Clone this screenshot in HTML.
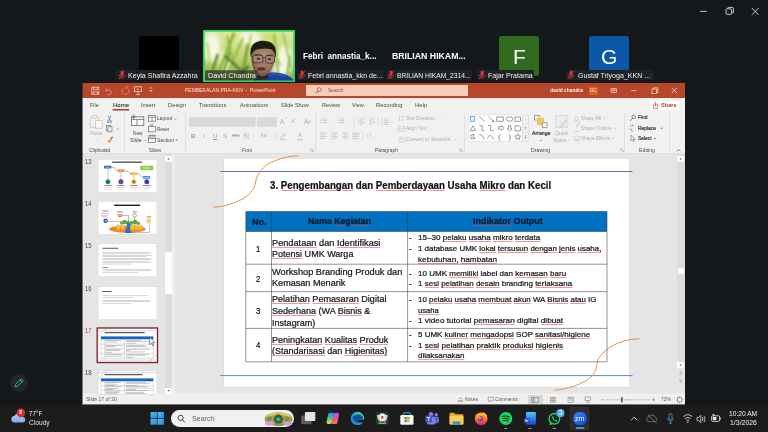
<!DOCTYPE html>
<html lang="id"><head><meta charset="utf-8"><title>PEMBEKALAN PRA-KKN - PowerPoint</title>
<style>
html,body{margin:0;padding:0;}
html{background:#15181b;}
body{width:768px;height:432px;overflow:hidden;position:relative;background:#15181b;font-family:"Liberation Sans", sans-serif;}
div,span.t,svg.a{position:absolute;}
span.t{white-space:pre;line-height:1;display:block;}
u{text-decoration:underline;text-decoration-color:rgba(226,70,60,.55);text-decoration-thickness:0.5px;text-underline-offset:1.1px;}
</style></head><body>
<svg class="a" style="left:0;top:0" width="768" height="432" viewBox="0 0 768 432" fill="none" stroke="#d8dadc" stroke-width="0.9">
<path d="M700 11.4h6.8"/>
<rect x="726" y="8.8" width="5.6" height="5.6" rx="1.2"/><path d="M727.6 8.8v-0.4a1 1 0 0 1 1-1h3.6a1.2 1.2 0 0 1 1.2 1.2v3.6a1 1 0 0 1-1 1h-0.6"/>
<path d="M751.8 8l6.8 6.8M758.6 8l-6.8 6.8"/>
</svg>
<div style="left:139.00px;top:36.00px;width:40.00px;height:40.00px;background:#000;border-radius:3px;"></div>
<div style="left:116.00px;top:70.00px;width:83.50px;height:10.40px;background:#1f2225;border-radius:2px;"></div>
<svg class="a" style="left:117.60px;top:70.20px" width="8" height="10" viewBox="0 0 8 10"><rect x="2.6" y="0.8" width="2.8" height="5" rx="1.4" fill="#e0353c"/><path d="M1.3 4.6a2.7 2.7 0 0 0 5.4 0M4 7.4v1.6" stroke="#e0353c" stroke-width="0.8" fill="none"/><path d="M6.8 0.8L1.2 9" stroke="#e0353c" stroke-width="0.9"/></svg>
<span class="t" style="font-size:7.60px;top:71.73px;color:#f2f2f2;left:127.90px;transform-origin:0 50%;transform:scaleX(0.9332);">Keyla Shafira Azzahra</span>
<svg class="a" style="left:203px;top:30px" width="92" height="52" viewBox="0 0 92 52">
<defs>
<filter id="b1" x="-20%" y="-20%" width="140%" height="140%"><feGaussianBlur stdDeviation="1.1"/></filter>
<filter id="b2" x="-20%" y="-20%" width="140%" height="140%"><feGaussianBlur stdDeviation="0.75"/></filter>
<filter id="b3" x="-20%" y="-20%" width="140%" height="140%"><feGaussianBlur stdDeviation="2.2"/></filter>
<linearGradient id="gr" x1="0" y1="0" x2="0" y2="1"><stop offset="0" stop-color="#dfe6a0"/><stop offset="0.5" stop-color="#c3d67c"/><stop offset="1" stop-color="#86ab44"/></linearGradient>
<radialGradient id="fc" cx="0.52" cy="0.32" r="0.62"><stop offset="0" stop-color="#b99078"/><stop offset="0.55" stop-color="#a57a62"/><stop offset="1" stop-color="#85604c"/></radialGradient>
<clipPath id="cp"><rect x="1.5" y="1.5" width="89" height="49"/></clipPath>
</defs>
<rect width="92" height="52" fill="#22d568"/>
<g clip-path="url(#cp)">
<rect x="1.5" y="1.5" width="89" height="49" fill="url(#gr)"/>
<g filter="url(#b3)">
<ellipse cx="9" cy="18" rx="8" ry="15" fill="#f6f6e6"/>
<ellipse cx="46" cy="8" rx="12" ry="7" fill="#f4f5dc"/>
<ellipse cx="82" cy="30" rx="8" ry="15" fill="#f3f5e4"/>
<ellipse cx="76" cy="40" rx="6" ry="8" fill="#f6f7ea"/>
<ellipse cx="30" cy="8" rx="8" ry="5" fill="#dbe58c"/>
<ellipse cx="68" cy="7" rx="9" ry="5" fill="#d3df74"/>
<ellipse cx="22" cy="32" rx="6" ry="12" fill="#e6ecc0"/>
</g>
<g filter="url(#b1)" fill="none">
<path d="M12 52L31 3" stroke="#7aae2c" stroke-width="2.6"/>
<path d="M17 52L27 22" stroke="#5d9426" stroke-width="2.2"/>
<path d="M21 52L40 8" stroke="#8dbb3c" stroke-width="2"/>
<path d="M33 44L24 6" stroke="#8ab83e" stroke-width="2"/>
<path d="M38 52L45 14" stroke="#6a9c2c" stroke-width="2.4"/>
<path d="M5 52L15 24" stroke="#5a8a28" stroke-width="2.4"/>
<path d="M22 26L42 44" stroke="#3f7020" stroke-width="2.2"/>
<path d="M28 52L46 36" stroke="#47781f" stroke-width="2.6"/>
<path d="M8 40L4 12" stroke="#a9c95a" stroke-width="1.6"/>
<path d="M76 52L71 4" stroke="#8fba3e" stroke-width="2"/>
<path d="M88 38L80 3" stroke="#9cc44a" stroke-width="1.8"/>
<path d="M83 52L87 26" stroke="#86b43c" stroke-width="2"/>
<path d="M66 14L78 36" stroke="#a4c954" stroke-width="1.6"/>
<path d="M44 30L48 4" stroke="#a4c850" stroke-width="1.6"/>
<path d="M2 52h46" stroke="#4f7d22" stroke-width="5"/>
</g>
<g filter="url(#b2)">
<path d="M50 52C51 47 55 44.500 60 43.500C66 42 74 42 80 43.800C86 45.500 90 48.500 92 52Z" fill="#1d3f9e"/>
<path d="M66 44C72 42.500 79 43 84 45.500L80 47C75 45 70 45 66 46Z" fill="#2c52b8"/>
<path d="M53.500 41L55 50L64.500 49L65.500 40Z" fill="#2e2522"/>
<path d="M48.600 24C47.600 33 50 41 55 44.600Q59 47.200 63 45.200C68.500 42 72.400 34 71.800 24C70 16.500 50.400 16.500 48.600 24Z" fill="url(#fc)"/>
<path d="M48.600 27Q48.200 36 53 43Q50.500 34 50.600 27Z" fill="#6e4c3c" fill-opacity="0.8"/>
<path d="M53 40Q59 46.500 66 40.500Q63.500 46 59 46.600Q55 46 53 40Z" fill="#7a5646" fill-opacity="0.8"/>
<path d="M47.800 27.500C45.600 15 52 10.800 60 10.800C68.400 10.800 74.600 15 72.600 27.500C71.800 22.500 70 19.600 66 19C62 18.400 57 18.600 54 19.400C50.600 20.400 48.800 23 47.800 27.500Z" fill="#1f1e19"/>
<rect x="49.800" y="24.800" width="10" height="8" rx="2.200" fill="#9c877c" fill-opacity="0.75" stroke="#2e2724" stroke-width="0.700"/>
<rect x="62.600" y="25.200" width="8.800" height="8" rx="2.200" fill="#9c877c" fill-opacity="0.75" stroke="#2e2724" stroke-width="0.700"/>
<path d="M59.800 27.600h2.800M49.800 26.600l-1.600-0.600M71.400 27l1-0.400" stroke="#2e2724" stroke-width="0.700"/>
<ellipse cx="55.300" cy="28.700" rx="1.700" ry="0.900" fill="#2e211c"/>
<ellipse cx="66.400" cy="29.200" rx="1.600" ry="0.900" fill="#2e211c"/>
<path d="M52 25.600q3-1.200 6.400-0.200M63.400 25.800q3-1 6 0.200" stroke="#3a2a22" stroke-width="0.800" fill="none"/>
<path d="M60.600 29.500q-0.800 3 -0.400 4.200q1.400 0.800 2.800 0" stroke="#7e5a48" stroke-width="0.800" fill="none"/>
<ellipse cx="58.400" cy="38.800" rx="4.200" ry="1.800" fill="#4e2e2a"/>
<path d="M54.800 38.200q3.600-1.200 7.200 0" stroke="#8a5a4e" stroke-width="0.600" fill="none"/>
</g>
<rect x="2" y="40.200" width="52.500" height="10.200" rx="1.500" fill="#2c3126" fill-opacity="0.74"/>
</g>
</svg>
<span class="t" style="font-size:7.60px;top:71.83px;color:#f4f4f4;left:207.50px;transform-origin:0 50%;transform:scaleX(0.9427);">David Chandra</span>
<span class="t" style="font-size:9.20px;top:51.68px;color:#fff;font-weight:700;left:302.50px;transform-origin:0 50%;transform:scaleX(0.8875);">Febri  annastia_k...</span>
<div style="left:296.50px;top:70.00px;width:87.20px;height:10.40px;background:#1f2225;border-radius:2px;"></div>
<svg class="a" style="left:298.10px;top:70.20px" width="8" height="10" viewBox="0 0 8 10"><rect x="2.6" y="0.8" width="2.8" height="5" rx="1.4" fill="#e0353c"/><path d="M1.3 4.6a2.7 2.7 0 0 0 5.4 0M4 7.4v1.6" stroke="#e0353c" stroke-width="0.8" fill="none"/><path d="M6.8 0.8L1.2 9" stroke="#e0353c" stroke-width="0.9"/></svg>
<span class="t" style="font-size:7.60px;top:71.73px;color:#f2f2f2;left:307.70px;transform-origin:0 50%;transform:scaleX(0.9206);">Febri annastia_kkn de...</span>
<span class="t" style="font-size:9.20px;top:51.68px;color:#fff;font-weight:700;left:392.00px;transform-origin:0 50%;transform:scaleX(0.9503);">BRILIAN HIKAM...</span>
<div style="left:385.80px;top:70.00px;width:86.50px;height:10.40px;background:#1f2225;border-radius:2px;"></div>
<svg class="a" style="left:387.40px;top:70.20px" width="8" height="10" viewBox="0 0 8 10"><rect x="2.6" y="0.8" width="2.8" height="5" rx="1.4" fill="#e0353c"/><path d="M1.3 4.6a2.7 2.7 0 0 0 5.4 0M4 7.4v1.6" stroke="#e0353c" stroke-width="0.8" fill="none"/><path d="M6.8 0.8L1.2 9" stroke="#e0353c" stroke-width="0.9"/></svg>
<span class="t" style="font-size:7.60px;top:71.73px;color:#f2f2f2;left:397.30px;transform-origin:0 50%;transform:scaleX(0.8854);">BRILIAN HIKAM_2314...</span>
<div style="left:498.80px;top:36.00px;width:40.40px;height:40.00px;background:#2f6a1f;border-radius:3px;"></div>
<span class="t" style="font-size:21.00px;top:46.33px;color:#fff;left:512.58px;transform-origin:0 50%;transform:scaleX(1.0010);">F</span>
<div style="left:476.50px;top:70.00px;width:57.50px;height:10.40px;background:#1f2225;border-radius:2px;"></div>
<svg class="a" style="left:478.10px;top:70.20px" width="8" height="10" viewBox="0 0 8 10"><rect x="2.6" y="0.8" width="2.8" height="5" rx="1.4" fill="#e0353c"/><path d="M1.3 4.6a2.7 2.7 0 0 0 5.4 0M4 7.4v1.6" stroke="#e0353c" stroke-width="0.8" fill="none"/><path d="M6.8 0.8L1.2 9" stroke="#e0353c" stroke-width="0.9"/></svg>
<span class="t" style="font-size:7.60px;top:71.73px;color:#f2f2f2;left:487.70px;transform-origin:0 50%;transform:scaleX(0.9300);">Fajar Pratama</span>
<div style="left:589.20px;top:36.00px;width:40.00px;height:40.00px;background:#0c58a6;border-radius:3px;"></div>
<span class="t" style="font-size:21.00px;top:46.33px;color:#fff;left:600.82px;transform-origin:0 50%;transform:scaleX(1.0010);">G</span>
<div style="left:565.80px;top:70.00px;width:87.80px;height:10.40px;background:#1f2225;border-radius:2px;"></div>
<svg class="a" style="left:567.40px;top:70.20px" width="8" height="10" viewBox="0 0 8 10"><rect x="2.6" y="0.8" width="2.8" height="5" rx="1.4" fill="#e0353c"/><path d="M1.3 4.6a2.7 2.7 0 0 0 5.4 0M4 7.4v1.6" stroke="#e0353c" stroke-width="0.8" fill="none"/><path d="M6.8 0.8L1.2 9" stroke="#e0353c" stroke-width="0.9"/></svg>
<span class="t" style="font-size:7.60px;top:71.73px;color:#f2f2f2;left:577.50px;transform-origin:0 50%;transform:scaleX(0.9286);">Gustaf Triyoga_KKN ...</span>
<svg class="a" style="left:9px;top:373px" width="20" height="20" viewBox="0 0 20 20"><circle cx="10" cy="10" r="9" fill="#23272b"/><path d="M6.200 13.800l0.600-2.600 5.400-5.400 2 2-5.400 5.400zM11 7l2 2" fill="none" stroke="#1fc466" stroke-width="1" stroke-linejoin="round"/></svg>
<div style="left:82.00px;top:83.00px;width:603.00px;height:321.00px;background:#f3f1f0;"></div>
<div style="left:82.00px;top:83.00px;width:603.00px;height:15.00px;background:#b7472a;"></div>
<div style="left:82.00px;top:154.00px;width:603.00px;height:240.00px;background:#e5e5e5;"></div>
<div style="left:82.00px;top:153.00px;width:603.00px;height:1.00px;background:#e2e0de;"></div>
<div style="left:82.00px;top:394.00px;width:603.00px;height:10.00px;background:#f2f0ef;"></div>
<div style="left:82.00px;top:393.00px;width:603.00px;height:1.00px;background:#ecebea;"></div>
<span class="t" style="font-size:5.60px;top:87.77px;color:#f7e3dc;left:185.20px;transform-origin:0 50%;transform:scaleX(0.8977);">PEMBEKALAN PRA-KKN  -  PowerPoint</span>
<div style="left:306.10px;top:85.20px;width:162.00px;height:10.70px;background:#fbcdb9;"></div>
<span class="t" style="font-size:5.60px;top:87.97px;color:#8a4a36;left:328.20px;transform-origin:0 50%;transform:scaleX(0.8619);">Search</span>
<span class="t" style="font-size:5.60px;top:88.37px;color:#fdf1ec;font-weight:700;left:550.00px;transform-origin:0 50%;transform:scaleX(0.8690);">david chandra</span>
<div style="left:588.50px;top:86.90px;width:9.20px;height:7.70px;background:#d8651f;"></div>
<span class="t" style="font-size:4.60px;top:88.64px;color:#fbe0cc;left:589.78px;transform-origin:0 50%;transform:scaleX(1.0010);">DC</span>
<span class="t" style="font-size:6.00px;top:102.28px;color:#4a4846;left:89.80px;transform-origin:0 50%;transform:scaleX(0.8986);">File</span>
<span class="t" style="font-size:6.00px;top:102.28px;color:#2f2e2d;left:113.00px;transform-origin:0 50%;transform:scaleX(0.9980);-webkit-text-stroke:0.12px;">Home</span>
<span class="t" style="font-size:6.00px;top:102.28px;color:#4a4846;left:141.00px;transform-origin:0 50%;transform:scaleX(0.9514);">Insert</span>
<span class="t" style="font-size:6.00px;top:102.28px;color:#4a4846;left:168.00px;transform-origin:0 50%;transform:scaleX(0.9622);">Design</span>
<span class="t" style="font-size:6.00px;top:102.28px;color:#4a4846;left:198.75px;transform-origin:0 50%;transform:scaleX(0.9347);">Transitions</span>
<span class="t" style="font-size:6.00px;top:102.28px;color:#4a4846;left:239.50px;transform-origin:0 50%;transform:scaleX(0.9489);">Animations</span>
<span class="t" style="font-size:6.00px;top:102.28px;color:#4a4846;left:281.20px;transform-origin:0 50%;transform:scaleX(0.9248);">Slide Show</span>
<span class="t" style="font-size:6.00px;top:102.28px;color:#4a4846;left:321.80px;transform-origin:0 50%;transform:scaleX(0.9134);">Review</span>
<span class="t" style="font-size:6.00px;top:102.28px;color:#4a4846;left:352.00px;transform-origin:0 50%;transform:scaleX(0.9134);">View</span>
<span class="t" style="font-size:6.00px;top:102.28px;color:#4a4846;left:376.30px;transform-origin:0 50%;transform:scaleX(0.9676);">Recording</span>
<span class="t" style="font-size:6.00px;top:102.28px;color:#4a4846;left:414.60px;transform-origin:0 50%;transform:scaleX(1.0036);">Help</span>
<svg class="a" style="left:0;top:0" width="768" height="432" viewBox="0 0 768 432"><rect x="112.700" y="109" width="16.400" height="1.600" fill="#b7472a"/><rect x="82" y="83" width="0.550" height="321" fill="#15181b"/></svg>
<div style="left:650.40px;top:100.60px;width:28.60px;height:9.20px;background:#fff;border-radius:1px;"></div>
<span class="t" style="font-size:5.60px;top:102.67px;color:#b3402a;font-weight:700;left:660.50px;transform-origin:0 50%;transform:scaleX(1.0088);">Share</span>
<span class="t" style="font-size:5.60px;top:130.67px;color:#b0adab;left:89.95px;transform-origin:0 50%;transform:scaleX(0.8725);">Paste</span>
<span class="t" style="font-size:5.60px;top:148.37px;color:#4a4846;left:89.30px;transform-origin:0 50%;transform:scaleX(0.8883);">Clipboard</span>
<span class="t" style="font-size:5.60px;top:131.17px;color:#4a4846;left:132.80px;transform-origin:0 50%;transform:scaleX(0.8560);">New</span>
<span class="t" style="font-size:5.60px;top:138.07px;color:#4a4846;left:130.20px;transform-origin:0 50%;transform:scaleX(0.9306);">Slide</span>
<span class="t" style="font-size:5.60px;top:116.27px;color:#4a4846;left:157.00px;transform-origin:0 50%;transform:scaleX(0.9100);">Layout</span>
<span class="t" style="font-size:5.60px;top:127.07px;color:#4a4846;left:157.00px;transform-origin:0 50%;transform:scaleX(0.8197);">Reset</span>
<span class="t" style="font-size:5.60px;top:137.77px;color:#4a4846;left:157.00px;transform-origin:0 50%;transform:scaleX(0.9096);">Section</span>
<span class="t" style="font-size:5.60px;top:148.37px;color:#4a4846;left:148.80px;transform-origin:0 50%;transform:scaleX(0.7992);">Slides</span>
<span class="t" style="font-size:5.60px;top:148.37px;color:#4a4846;left:241.60px;transform-origin:0 50%;transform:scaleX(0.8828);">Font</span>
<span class="t" style="font-size:5.60px;top:148.37px;color:#4a4846;left:374.70px;transform-origin:0 50%;transform:scaleX(0.8757);">Paragraph</span>
<span class="t" style="font-size:5.60px;top:115.97px;color:#b0adab;left:406.30px;transform-origin:0 50%;transform:scaleX(0.8460);">Text Direction</span>
<span class="t" style="font-size:5.60px;top:126.37px;color:#b0adab;left:406.30px;transform-origin:0 50%;transform:scaleX(0.8643);">Align Text</span>
<span class="t" style="font-size:5.60px;top:136.77px;color:#b0adab;left:406.30px;transform-origin:0 50%;transform:scaleX(0.9033);">Convert to SmartArt</span>
<span class="t" style="font-size:5.60px;top:130.67px;color:#333;left:531.60px;transform-origin:0 50%;transform:scaleX(0.9234);-webkit-text-stroke:0.2px;">Arrange</span>
<span class="t" style="font-size:5.60px;top:130.67px;color:#b0adab;left:555.10px;transform-origin:0 50%;transform:scaleX(0.9074);">Quick</span>
<span class="t" style="font-size:5.60px;top:138.17px;color:#b0adab;left:552.60px;transform-origin:0 50%;transform:scaleX(0.8787);">Styles</span>
<span class="t" style="font-size:5.60px;top:116.17px;color:#b0adab;left:581.25px;transform-origin:0 50%;transform:scaleX(0.8133);">Shape Fill</span>
<span class="t" style="font-size:5.60px;top:125.57px;color:#b0adab;left:581.25px;transform-origin:0 50%;transform:scaleX(0.8665);">Shape Outline</span>
<span class="t" style="font-size:5.60px;top:135.57px;color:#b0adab;left:581.25px;transform-origin:0 50%;transform:scaleX(0.8413);">Shape Effects</span>
<span class="t" style="font-size:5.60px;top:148.37px;color:#4a4846;left:531.00px;transform-origin:0 50%;transform:scaleX(0.9391);">Drawing</span>
<span class="t" style="font-size:5.60px;top:115.17px;color:#333;left:638.00px;transform-origin:0 50%;transform:scaleX(0.8714);-webkit-text-stroke:0.2px;">Find</span>
<span class="t" style="font-size:5.60px;top:125.57px;color:#333;left:638.00px;transform-origin:0 50%;transform:scaleX(0.8758);-webkit-text-stroke:0.2px;">Replace</span>
<span class="t" style="font-size:5.60px;top:135.57px;color:#333;left:638.00px;transform-origin:0 50%;transform:scaleX(0.8675);-webkit-text-stroke:0.2px;">Select</span>
<span class="t" style="font-size:5.60px;top:148.37px;color:#4a4846;left:638.70px;transform-origin:0 50%;transform:scaleX(0.9342);">Editing</span>
<span class="t" style="font-size:6.00px;top:132.98px;color:#9c9997;font-weight:700;left:191.33px;transform-origin:0 50%;transform:scaleX(1.0010);">B</span>
<span class="t" style="font-size:6.00px;top:132.98px;color:#9c9997;font-style:italic;left:203.46px;transform-origin:0 50%;transform:scaleX(1.0010);">I</span>
<span class="t" style="font-size:6.00px;top:132.98px;color:#9c9997;left:212.53px;transform-origin:0 50%;transform:scaleX(1.0010);text-decoration:underline;">U</span>
<span class="t" style="font-size:6.00px;top:132.98px;color:#9c9997;left:222.99px;transform-origin:0 50%;transform:scaleX(1.0010);">S</span>
<span class="t" style="font-size:4.60px;top:133.84px;color:#b0adab;left:231.79px;transform-origin:0 50%;transform:scaleX(1.0010);text-decoration:line-through;">abc</span>
<span class="t" style="font-size:5.20px;top:132.76px;color:#b0adab;left:243.22px;transform-origin:0 50%;transform:scaleX(1.0010);">AV</span>
<span class="t" style="font-size:5.60px;top:133.17px;color:#b0adab;left:259.87px;transform-origin:0 50%;transform:scaleX(1.0010);">Aa</span>
<span class="t" style="font-size:6.60px;top:118.50px;color:#b0adab;left:280.19px;transform-origin:0 50%;transform:scaleX(1.0010);">A</span>
<span class="t" style="font-size:5.60px;top:119.37px;color:#b0adab;left:290.93px;transform-origin:0 50%;transform:scaleX(1.0010);">A</span>
<span class="t" style="font-size:6.60px;top:118.50px;color:#b0adab;left:304.09px;transform-origin:0 50%;transform:scaleX(1.0010);">A</span>
<span class="t" style="font-size:6.20px;top:132.09px;color:#b0adab;left:297.93px;transform-origin:0 50%;transform:scaleX(1.0010);">A</span>
<svg class="a" style="left:0;top:0" width="768" height="432" viewBox="0 0 768 432" fill="none"><path d="M124.5 113v38.5" stroke="#d9d6d4" stroke-width="0.7"/><path d="M185.6 113v38.5" stroke="#d9d6d4" stroke-width="0.7"/><path d="M315.7 113v38.5" stroke="#d9d6d4" stroke-width="0.7"/><path d="M464.4 113v38.5" stroke="#d9d6d4" stroke-width="0.7"/><path d="M624.6 113v38.5" stroke="#d9d6d4" stroke-width="0.7"/><path d="M669.6 113v38.5" stroke="#d9d6d4" stroke-width="0.7"/><path d="M276.4 131.0V141.0" stroke="#d4d1cf" stroke-width="0.6"/><path d="M354.0 117.0V126.5" stroke="#d4d1cf" stroke-width="0.6"/><path d="M378.5 117.0V126.5" stroke="#d4d1cf" stroke-width="0.6"/><path d="M362.4 131.0V141.0" stroke="#d4d1cf" stroke-width="0.6"/><g stroke="#f2d3c9" stroke-width="0.8" fill="none"><rect x="91.8" y="87.2" width="7" height="7"/><path d="M93.4 87.2v2.4h3.8v-2.4M93.2 94.2v-2.4h4.2v2.4"/><path d="M107.2 88.2l-1.8 1.8 1.8 1.8M105.6 90h3.4a2.4 2.4 0 0 1 0 4.8h-1.6" stroke="#e39c86"/><path d="M126.6 87.6a3.5 3.5 0 1 1-3.2 0.4M126.8 85.8v2.2h-2.2" stroke="#d98a73"/><rect x="134.6" y="86.8" width="6.8" height="4.8"/><path d="M138 91.6v2.4M136 94.6h4"/><path d="M137.2 88.2v2l1.8-1z" fill="#f2d3c9" stroke="none"/><path d="M149.6 88h2.8"/><path d="M149.4 90.2h3.2l-1.6 1.8z" fill="#f2d3c9" stroke="none"/><path d="M114.6 90.6l0.8 0.8 0.8-0.8" stroke="#e39c86" stroke-width="0.5"/><circle cx="319.2" cy="89.6" r="2" stroke="#8a4a36" stroke-width="0.7"/><path d="M317.8 91l-2.2 2.4" stroke="#8a4a36" stroke-width="0.8"/><rect x="611" y="88.600" width="5.400" height="4" rx="0.400"/><path d="M611 90h5.400M613.700 90v2.600"/><path d="M631.2 90.6h5.4"/><rect x="652" y="89" width="4.6" height="4.6"/><path d="M653.4 89v-1.2h4.6v4.6h-1.4"/><path d="M671.8 88l5 5M676.8 88l-5 5" stroke-width="0.9"/></g><path d="M653.4 104.8h4.2v3.6h-4.2zM655.5 106.4v-4M654 103.6l1.5-1.5 1.5 1.5" stroke="#b3402a" stroke-width="0.6" fill="none"/><path d="M676.6 151.4l1.9-1.9 1.9 1.9" stroke="#555" stroke-width="0.7" fill="none"/><path d="M104.6 149h2.4M104.6 149v2.4M105.8 151.6h1.6v-1.6" stroke="#8f8c8a" stroke-width="0.5" fill="none"/><path d="M310.6 149h2.4M310.6 149v2.4M311.8 151.6h1.6v-1.6" stroke="#8f8c8a" stroke-width="0.5" fill="none"/><path d="M459.6 149h2.4M459.6 149v2.4M460.8 151.6h1.6v-1.6" stroke="#8f8c8a" stroke-width="0.5" fill="none"/><path d="M620.8 149h2.4M620.8 149v2.4M622.0 151.6h1.6v-1.6" stroke="#8f8c8a" stroke-width="0.5" fill="none"/><g stroke="#c6c3c1" stroke-width="0.8" fill="#f3f1f0"><rect x="90.2" y="117" width="8.6" height="10.6" rx="0.8"/><rect x="92.6" y="115.4" width="3.8" height="2.8" rx="0.6"/><rect x="95.6" y="120.6" width="6.6" height="7.6" fill="#fafafa"/></g><path d="M95.10 139.70l1.10 1.10l1.10 -1.10" stroke="#c0bdbb" stroke-width="0.6" fill="none"/><path d="M108 115.6l2.6 5M111 115.6l-2.6 5" stroke="#6e6c6a" stroke-width="0.7"/><circle cx="108.2" cy="121.6" r="1" fill="none" stroke="#2a7fd4" stroke-width="0.7"/><circle cx="110.8" cy="121.6" r="1" fill="none" stroke="#2a7fd4" stroke-width="0.7"/><g stroke="#6e6c6a" stroke-width="0.7" fill="#f8f8f8"><rect x="106.4" y="125.4" width="4" height="5"/><rect x="108" y="126.8" width="4" height="5"/></g><path d="M116.50 128.30l1.10 1.10l1.10 -1.10" stroke="#6a6866" stroke-width="0.6" fill="none"/><path d="M107.2 141.6l2.8-2.8 1.8 1.6-2.6 2.6z" fill="#e8a33a"/><path d="M110.2 138.6l2-2.2 1 1-2 2.2z" fill="#6e6c6a"/><g stroke="#6e6c6a" stroke-width="0.8" fill="#fbfbfb"><rect x="131.6" y="116.8" width="12.2" height="8.8"/><path d="M131.6 119.4h12.2M137 119.4v6.2" fill="none"/></g><path d="M133.6 114.4v5M131.1 116.9h5" stroke="#2d9a54" stroke-width="0.9"/><path d="M144.30 139.70l1.10 1.10l1.10 -1.10" stroke="#6a6866" stroke-width="0.6" fill="none"/><g stroke="#6e6c6a" stroke-width="0.7" fill="#fbfbfb"><rect x="148.6" y="115.6" width="7" height="5.6"/><path d="M148.6 117.2h7M152 117.2v4" fill="none"/><rect x="148.6" y="126.4" width="7" height="5.4"/><rect x="148.6" y="137" width="7" height="5.6"/><path d="M148.6 138.6h7" fill="none"/></g><path d="M149.4 126.6a2 2 0 0 1 3-1.6M152.6 123.8v1.6h-1.6" stroke="#2a7fd4" stroke-width="0.6" fill="none"/><path d="M148.6 135.4h7" stroke="#2d9a54" stroke-width="0.9"/><path d="M174.30 118.30l1.10 1.10l1.10 -1.10" stroke="#6a6866" stroke-width="0.6" fill="none"/><path d="M175.80 139.40h2.4l-1.2 1.4z" fill="#6a6866"/><rect x="189" y="117.2" width="66.5" height="9.6" fill="#dbd9d8"/><rect x="257" y="117.2" width="20" height="9.6" fill="#dbd9d8"/><path d="M251.52 121.80l0.88 0.88l0.88 -0.88" stroke="#bdbab8" stroke-width="0.6" fill="none"/><path d="M272.92 121.80l0.88 0.88l0.88 -0.88" stroke="#bdbab8" stroke-width="0.6" fill="none"/><path d="M285 118.4l0.9-0.9 0.9 0.9M295 118.6l0.8 0.8 0.8-0.8" stroke="#b5b2b0" stroke-width="0.5" fill="none"/><path d="M307.6 122.4l2-2 1.2 1.2-2 2z" fill="#ddd0dd" stroke="#b5b2b0" stroke-width="0.4"/><path d="M253.23 135.65l0.77 0.77l0.77 -0.77" stroke="#c0bdbb" stroke-width="0.6" fill="none"/><path d="M269.43 135.65l0.77 0.77l0.77 -0.77" stroke="#c0bdbb" stroke-width="0.6" fill="none"/><path d="M289.83 135.65l0.77 0.77l0.77 -0.77" stroke="#c0bdbb" stroke-width="0.6" fill="none"/><path d="M307.03 135.65l0.77 0.77l0.77 -0.77" stroke="#c0bdbb" stroke-width="0.6" fill="none"/><path d="M280.6 137.6l3.6-4.2 1.2 1-3.6 4.2z" fill="none" stroke="#b5b2b0" stroke-width="0.6"/><path d="M279.8 139.6h6.4" stroke="#c9c6c4" stroke-width="1"/><path d="M297 139.8h6" stroke="#c9c6c4" stroke-width="1"/><path d="M243.6 138.4h5.6M244.4 137.6l-0.9 0.8 0.9 0.8M248.4 137.6l0.9 0.8-0.9 0.8" stroke="#b5b2b0" stroke-width="0.45" fill="none"/><path d="M322.20 118.90h5.00" stroke="#bebbb9" stroke-width="0.70"/><path d="M322.20 120.70h5.00" stroke="#bebbb9" stroke-width="0.70"/><path d="M322.20 122.50h5.00" stroke="#bebbb9" stroke-width="0.70"/><path d="M320.00 118.90h1.10" stroke="#c9c6c4" stroke-width="0.70"/><path d="M320.00 120.70h1.10" stroke="#c9c6c4" stroke-width="0.70"/><path d="M320.00 122.50h1.10" stroke="#c9c6c4" stroke-width="0.70"/><path d="M329.83 121.85l0.77 0.77l0.77 -0.77" stroke="#c0bdbb" stroke-width="0.6" fill="none"/><path d="M339.20 118.90h5.00" stroke="#bebbb9" stroke-width="0.70"/><path d="M339.20 120.70h5.00" stroke="#bebbb9" stroke-width="0.70"/><path d="M339.20 122.50h5.00" stroke="#bebbb9" stroke-width="0.70"/><path d="M337.00 118.90h1.10" stroke="#c9c6c4" stroke-width="0.70"/><path d="M337.00 120.70h1.10" stroke="#c9c6c4" stroke-width="0.70"/><path d="M337.00 122.50h1.10" stroke="#c9c6c4" stroke-width="0.70"/><path d="M346.83 121.85l0.77 0.77l0.77 -0.77" stroke="#c0bdbb" stroke-width="0.6" fill="none"/><path d="M359.60 118.90h5.40" stroke="#bebbb9" stroke-width="0.70"/><path d="M359.60 120.70h3.00" stroke="#bebbb9" stroke-width="0.70"/><path d="M359.60 122.50h5.40" stroke="#bebbb9" stroke-width="0.70"/><path d="M359.60 124.30h3.00" stroke="#bebbb9" stroke-width="0.70"/><path d="M369.20 118.90h5.40" stroke="#bebbb9" stroke-width="0.70"/><path d="M369.20 120.70h3.00" stroke="#bebbb9" stroke-width="0.70"/><path d="M369.20 122.50h5.40" stroke="#bebbb9" stroke-width="0.70"/><path d="M369.20 124.30h3.00" stroke="#bebbb9" stroke-width="0.70"/><path d="M357.8 121.6l1.2-1v2zM374.8 121.6l-1.2-1v2z" fill="#c6c3c1"/><path d="M384.00 118.90h4.60" stroke="#bebbb9" stroke-width="0.70"/><path d="M384.00 120.70h4.60" stroke="#bebbb9" stroke-width="0.70"/><path d="M384.00 122.50h4.60" stroke="#bebbb9" stroke-width="0.70"/><path d="M384.00 124.30h4.60" stroke="#bebbb9" stroke-width="0.70"/><path d="M382.2 118.4v6.4M381.4 119.2l0.8-0.9 0.8 0.9M381.4 124l0.8 0.9 0.8-0.9" stroke="#bebbb9" stroke-width="0.5" fill="none"/><path d="M391.23 121.85l0.77 0.77l0.77 -0.77" stroke="#c0bdbb" stroke-width="0.6" fill="none"/><path d="M320.20 133.00h6.60" stroke="#bebbb9" stroke-width="0.70"/><path d="M320.20 134.80h4.60" stroke="#bebbb9" stroke-width="0.70"/><path d="M320.20 136.60h6.60" stroke="#bebbb9" stroke-width="0.70"/><path d="M320.20 138.40h4.60" stroke="#bebbb9" stroke-width="0.70"/><path d="M331.00 133.00h6.60" stroke="#bebbb9" stroke-width="0.7"/><path d="M332.00 134.80h4.60" stroke="#bebbb9" stroke-width="0.7"/><path d="M331.00 136.60h6.60" stroke="#bebbb9" stroke-width="0.7"/><path d="M332.00 138.40h4.60" stroke="#bebbb9" stroke-width="0.7"/><path d="M341.80 133.00h6.60" stroke="#bebbb9" stroke-width="0.7"/><path d="M343.80 134.80h4.60" stroke="#bebbb9" stroke-width="0.7"/><path d="M341.80 136.60h6.60" stroke="#bebbb9" stroke-width="0.7"/><path d="M343.80 138.40h4.60" stroke="#bebbb9" stroke-width="0.7"/><path d="M352.40 133.00h6.60" stroke="#bebbb9" stroke-width="0.70"/><path d="M352.40 134.80h6.60" stroke="#bebbb9" stroke-width="0.70"/><path d="M352.40 136.60h6.60" stroke="#bebbb9" stroke-width="0.70"/><path d="M352.40 138.40h6.60" stroke="#bebbb9" stroke-width="0.70"/><path d="M366.40 133.80h1.80" stroke="#cfccca" stroke-width="0.70"/><path d="M366.40 135.60h1.80" stroke="#cfccca" stroke-width="0.70"/><path d="M366.40 137.40h1.80" stroke="#cfccca" stroke-width="0.70"/><path d="M369.20 133.80h1.80" stroke="#cfccca" stroke-width="0.70"/><path d="M369.20 135.60h1.80" stroke="#cfccca" stroke-width="0.70"/><path d="M369.20 137.40h1.80" stroke="#cfccca" stroke-width="0.70"/><path d="M375.23 135.65l0.77 0.77l0.77 -0.77" stroke="#c8c5c3" stroke-width="0.6" fill="none"/><path d="M399.6 115.4v5.6M398.6 120l1 1.1 1-1.1M402.8 115.6v5.4M402 116.4h1.6" stroke="#bebbb9" stroke-width="0.55" fill="none"/><rect x="398.4" y="126.4" width="5.8" height="5" fill="none" stroke="#bebbb9" stroke-width="0.55"/><path d="M397.4 128.9h7.8" stroke="#bebbb9" stroke-width="0.55"/><path d="M398.4 137.2h4.6M399.6 139h5.4v3h-5.4z" stroke="#bebbb9" stroke-width="0.55" fill="none"/><path d="M439.83 118.45l0.77 0.77l0.77 -0.77" stroke="#c0bdbb" stroke-width="0.6" fill="none"/><path d="M431.23 128.85l0.77 0.77l0.77 -0.77" stroke="#c0bdbb" stroke-width="0.6" fill="none"/><path d="M454.40 139.00h2.4l-1.2 1.4z" fill="#c0bdbb"/><rect x="468.8" y="115" width="53.4" height="26.2" fill="#fff" stroke="#dcdad8" stroke-width="0.5"/><rect x="522.4" y="115" width="6.2" height="26.2" fill="#f3f1f0" stroke="#d6d3d1" stroke-width="0.5"/><path d="M522.4 123.6h6.2M522.4 132.4h6.2" stroke="#d6d3d1" stroke-width="0.5"/><path d="M524.6 120l0.9-0.9 0.9 0.9" stroke="#c6c3c1" stroke-width="0.5" fill="none"/><path d="M524.4 127.6h2.2l-1.1 1.3zM524.4 137h2.2l-1.1 1.3z" fill="#6e6c6a"/><path d="M524.4 135.8h2.2" stroke="#6e6c6a" stroke-width="0.5"/><rect x="470.2" y="116.6" width="4.6" height="4.6" fill="#e8f1fb" stroke="#2a7fd4" stroke-width="0.6"/><path d="M479.4 116.4l5.4 5.4M488.6 116.4l5.2 5.2M493.8 121.6v-1.8M493.8 121.6h-1.8" stroke="#5c5a58" stroke-width="0.6" fill="none"/><rect x="496.8" y="117" width="6.4" height="4.2" stroke="#5c5a58" stroke-width="0.6" fill="none"/><ellipse cx="509.6" cy="119.1" rx="3.4" ry="2.2" stroke="#5c5a58" stroke-width="0.6" fill="none"/><rect x="515" y="117" width="5.6" height="4.2" stroke="#5c5a58" stroke-width="0.6" fill="none"/><path d="M470.2 130.6l2.6-4.8 2.6 4.8z" stroke="#5c5a58" stroke-width="0.6" fill="none"/><path d="M479.4 125.6h2.6v5h2.6M488 125.6h2.6v5h3M498.600 126.800h3.200v-1.200l2.400 2.400-2.400 2.400v-1.200h-3.200zM508.400 125.600h2.400v3.200h1.200l-2.400 2.400-2.400-2.400h1.200zM515 125.800h4.400l1.200 1.200v3.800h-5.600z" stroke="#5c5a58" stroke-width="0.6" fill="none"/><path d="M470.600 135.400l3.800-1-1.600 2.400 2.400 1.600-4.200 0.600zM479 134.600q4.600 0 4.800 5M487.400 138.600q2-5 3.600-2.400t3 3M500.400 134.400q-1.200 0-1.200 1.200v1q0 0.700-0.900 0.700q0.900 0 0.900 0.700v1q0 1.200 1.200 1.200M508.800 134.400q1.200 0 1.200 1.200v1q0 0.700 0.900 0.700q-0.900 0-0.900 0.700v1q0 1.200-1.200 1.200" stroke="#5c5a58" stroke-width="0.6" fill="none"/><path d="M517.8 133.800l0.900 2 2.100 0.200-1.600 1.400 0.500 2.200-1.900-1.200-1.900 1.200 0.500-2.200-1.600-1.400 2.100-0.200z" stroke="#5c5a58" stroke-width="0.6" fill="none"/><rect x="534.600" y="115.400" width="4.600" height="4.600" fill="#fbfbfb" stroke="#6e6c6a" stroke-width="0.6"/><rect x="537" y="117.800" width="7.200" height="7.200" fill="#f3c65c"/><rect x="542.200" y="122.800" width="4.800" height="4.800" fill="#fbfbfb" stroke="#6e6c6a" stroke-width="0.6"/><path d="M539.50 139.90l1.10 1.10l1.10 -1.10" stroke="#6a6866" stroke-width="0.6" fill="none"/><rect x="555.4" y="115.2" width="12.4" height="12.4" fill="#ecebea" stroke="#d3d0ce" stroke-width="0.6"/><path d="M560 126.800l5.800-7 1.200 1-5.800 7z" fill="#e3e1df" stroke="#c6c3c1" stroke-width="0.5"/><path d="M567.43 140.05l0.77 0.77l0.77 -0.77" stroke="#c0bdbb" stroke-width="0.6" fill="none"/><path d="M576.200 116.200l2.200 2.600-2 1.600-1.600-1.400zM574 121.200h5.600" stroke="#bebbb9" stroke-width="0.6" fill="none"/><path d="M576 126l3.200-3 1 1-3.200 3zM574 131.400h5.600" stroke="#bebbb9" stroke-width="0.6" fill="none"/><ellipse cx="576.800" cy="138" rx="2.800" ry="2" stroke="#bebbb9" stroke-width="0.6" fill="none"/><path d="M574.200 140.600h5.400" stroke="#bebbb9" stroke-width="0.6"/><path d="M603.40 117.80h2.4l-1.2 1.4z" fill="#c0bdbb"/><path d="M613.80 127.80h2.4l-1.2 1.4z" fill="#c0bdbb"/><path d="M612.20 137.80h2.4l-1.2 1.4z" fill="#c0bdbb"/><circle cx="633.8" cy="116.800" r="1.800" stroke="#4a4846" stroke-width="0.6" fill="none"/><path d="M632.600 118.200l-2.400 2.600" stroke="#4a4846" stroke-width="0.7"/><path d="M630.400 126.800q0.600-2 2.800-1.400M632.600 124.400l0.800 1-1.200 0.600" stroke="#2a7fd4" stroke-width="0.55" fill="none"/><path d="M629.600 129.200h2.400M631 131h2.400" stroke="#2a7fd4" stroke-width="0.55"/><path d="M631 135.200v5.600l1.400-1.400 1 2.200 0.900-0.400-1-2.200h1.900z" stroke="#4a4846" stroke-width="0.5" fill="#fbfbfb"/><path d="M660.40 127.80h2.4l-1.2 1.4z" fill="#6a6866"/><path d="M653.60 138.00h2.4l-1.2 1.4z" fill="#6a6866"/></svg>
<div style="left:165.30px;top:154.00px;width:6.50px;height:240.40px;background:#dcdcdc;"></div>
<div style="left:165.30px;top:155.80px;width:6.50px;height:5.80px;background:#fdfdfd;"></div>
<div style="left:165.30px;top:388.00px;width:6.50px;height:5.60px;background:#fdfdfd;"></div>
<div style="left:165.30px;top:252.00px;width:6.50px;height:41.50px;background:#fdfdfd;"></div>
<div style="left:171.80px;top:154.00px;width:2.80px;height:240.40px;background:#efefef;"></div>
<svg class="a" style="left:0;top:0" width="768" height="432" viewBox="0 0 768 432"><path d="M167.4 159.4h2.4l-1.2-1.5zM167.4 390h2.4l-1.2 1.5z" fill="#555"/></svg>
<span class="t" style="font-size:7.60px;top:157.53px;color:#444;left:84.90px;transform-origin:0 50%;transform:scaleX(0.7800);">13</span>
<span class="t" style="font-size:7.60px;top:199.53px;color:#444;left:84.90px;transform-origin:0 50%;transform:scaleX(0.7800);">14</span>
<span class="t" style="font-size:7.60px;top:241.83px;color:#444;left:84.90px;transform-origin:0 50%;transform:scaleX(0.7800);">15</span>
<span class="t" style="font-size:7.60px;top:284.83px;color:#444;left:84.90px;transform-origin:0 50%;transform:scaleX(0.7800);">16</span>
<span class="t" style="font-size:7.60px;top:327.03px;color:#b7472a;left:84.90px;transform-origin:0 50%;transform:scaleX(0.7800);">17</span>
<span class="t" style="font-size:7.60px;top:369.03px;color:#444;left:84.90px;transform-origin:0 50%;transform:scaleX(0.7800);">18</span>
<svg class="a" style="left:0;top:0" width="768" height="432" viewBox="0 0 768 432"><rect x="98.10" y="159.30" width="58.80" height="33.10" fill="#fff" stroke="#cfcfcf" stroke-width="0.4"/><rect x="98.10" y="201.30" width="58.80" height="33.10" fill="#fff" stroke="#cfcfcf" stroke-width="0.4"/><rect x="98.10" y="243.60" width="58.80" height="33.10" fill="#fff" stroke="#cfcfcf" stroke-width="0.4"/><rect x="98.10" y="286.60" width="58.80" height="33.10" fill="#fff" stroke="#cfcfcf" stroke-width="0.4"/><rect x="98.10" y="328.80" width="58.80" height="33.10" fill="#fff" stroke="#cfcfcf" stroke-width="0.4"/><rect x="98.10" y="370.80" width="58.80" height="23.40" fill="#fff" stroke="#cfcfcf" stroke-width="0.4"/><rect x="112.10" y="161.60" width="30.00" height="1.10" fill="#2a2a2a"/><rect x="104.00" y="165.80" width="7.20" height="2.700" rx="0.400" fill="#3a5fb8"/><rect x="105.40" y="166.90" width="4.40" height="0.50" fill="#e8eefc"/><rect x="117.90" y="169.30" width="6.20" height="2.700" rx="0.400" fill="#f08a3a"/><rect x="119.30" y="170.40" width="3.40" height="0.50" fill="#e8eefc"/><rect x="130.60" y="172.30" width="6.50" height="2.700" rx="0.400" fill="#f6b81a"/><rect x="132.00" y="173.40" width="3.70" height="0.50" fill="#e8eefc"/><rect x="143.10" y="176.00" width="7.00" height="2.700" rx="0.400" fill="#3a9ae0"/><rect x="144.50" y="177.10" width="4.20" height="0.50" fill="#e8eefc"/><path d="M111.20 167.10q3.500 0.200 4.600 2t2.400 1.700M124.10 170.60q3.500 0.200 4.600 1.600t2.400 1.500M137.10 173.60q3 0.200 4 2t2.300 1.800" stroke="#555" stroke-width="0.45" fill="none"/><rect x="140.30" y="165.80" width="12.800" height="4.300" fill="#8cc63f"/><rect x="142.80" y="167.60" width="7.80" height="0.80" fill="#fff"/><path d="M107.90 168.50V180.30" stroke="#8a8a8a" stroke-width="0.5"/><circle cx="107.90" cy="181.80" r="2.500" fill="#2a9a6a"/><circle cx="107.90" cy="181.80" r="1.100" fill="#1c4f3c"/><rect x="104.30" y="185.20" width="7.20" height="0.70" fill="#555"/><rect x="103.70" y="187.20" width="8.40" height="0.45" fill="#b5b5b5"/><rect x="104.70" y="188.90" width="6.40" height="0.45" fill="#c2c2c2"/><path d="M120.90 172.00V180.30" stroke="#8a8a8a" stroke-width="0.5"/><circle cx="120.90" cy="181.80" r="2.500" fill="#5a3fb0"/><circle cx="120.90" cy="181.80" r="1.100" fill="#d83048"/><rect x="117.30" y="185.20" width="7.20" height="0.70" fill="#555"/><rect x="116.70" y="187.20" width="8.40" height="0.45" fill="#b5b5b5"/><rect x="117.70" y="188.90" width="6.40" height="0.45" fill="#c2c2c2"/><path d="M133.80 175.00V180.30" stroke="#8a8a8a" stroke-width="0.5"/><circle cx="133.80" cy="181.80" r="2.500" fill="#f0c020"/><circle cx="133.80" cy="181.80" r="1.100" fill="#4a5a3a"/><rect x="130.20" y="185.20" width="7.20" height="0.70" fill="#555"/><rect x="129.60" y="187.20" width="8.40" height="0.45" fill="#b5b5b5"/><rect x="130.60" y="188.90" width="6.40" height="0.45" fill="#c2c2c2"/><path d="M146.80 178.70V180.30" stroke="#8a8a8a" stroke-width="0.5"/><circle cx="146.80" cy="181.80" r="2.500" fill="#5a3fb0"/><circle cx="146.80" cy="181.80" r="1.100" fill="#3a2a80"/><rect x="143.20" y="185.20" width="7.20" height="0.70" fill="#555"/><rect x="142.60" y="187.20" width="8.40" height="0.45" fill="#b5b5b5"/><rect x="143.60" y="188.90" width="6.40" height="0.45" fill="#c2c2c2"/><rect x="114.20" y="204.60" width="26.00" height="1.40" fill="#1e1e1e"/><ellipse cx="127.40" cy="229.10" rx="18.500" ry="3.700" fill="#f0862a"/><circle cx="121.80" cy="223.10" r="1.80" fill="#62a83a"/><circle cx="124.60" cy="221.90" r="2.20" fill="#62a83a"/><circle cx="127.80" cy="222.70" r="2.00" fill="#62a83a"/><circle cx="131.20" cy="222.90" r="2.00" fill="#62a83a"/><circle cx="135.00" cy="222.10" r="2.30" fill="#62a83a"/><circle cx="138.20" cy="223.30" r="1.70" fill="#62a83a"/><circle cx="129.20" cy="224.30" r="2.00" fill="#62a83a"/><path d="M126.40 222.90q1.800 2.200 0.200 4.800t-2 5.200h8.300q-3.600-2-2.800-5t-1.200-5z" fill="#2a6fd0"/><rect x="116.60" y="225.70" width="3.40" height="3.800" fill="#f6c424"/><path d="M116.30 225.70l2.00 -1.800l2.00 1.800z" fill="#c9b9a0"/><rect x="120.80" y="225.70" width="3.60" height="3.800" fill="#f6c424"/><path d="M120.50 225.70l2.10 -1.800l2.10 1.800z" fill="#c9b9a0"/><rect x="130.60" y="225.70" width="3.60" height="3.800" fill="#f6c424"/><path d="M130.30 225.70l2.10 -1.800l2.10 1.800z" fill="#c9b9a0"/><rect x="135.20" y="225.70" width="3.60" height="3.800" fill="#f6c424"/><path d="M134.90 225.70l2.10 -1.800l2.10 1.800z" fill="#c9b9a0"/><rect x="139.20" y="225.70" width="3.20" height="3.800" fill="#f6c424"/><path d="M138.90 225.70l1.90 -1.800l1.90 1.800z" fill="#c9b9a0"/><path d="M107.80 221.40H121.80M122.20 215.50H128.50V222.10M134.60 217.40V225.80M149.40 222.90V232.50H132.90" stroke="#667" stroke-width="0.45" fill="none"/><circle cx="105.60" cy="220.70" r="2.200" fill="#2a50d0"/><circle cx="105.80" cy="220.70" r="0.800" fill="#fff"/><ellipse cx="120.00" cy="215.50" rx="2.300" ry="1.700" fill="#f07a2a"/><ellipse cx="120.00" cy="215.50" rx="1" ry="0.600" fill="#fff"/><circle cx="134.60" cy="215.50" r="1.800" fill="#fff" stroke="#777" stroke-width="0.700"/><circle cx="148.80" cy="220.70" r="2.200" fill="#f6c01a"/><circle cx="149.00" cy="220.70" r="0.800" fill="#fff"/><rect x="102.40" y="210.70" width="6.30" height="0.70" fill="#666"/><rect x="101.00" y="213.50" width="7.80" height="0.50" fill="#f06aa0"/><rect x="101.00" y="214.90" width="7.80" height="0.50" fill="#f06aa0"/><rect x="101.80" y="216.30" width="6.00" height="0.50" fill="#f06aa0"/><rect x="117.00" y="211.60" width="5.90" height="0.70" fill="#555"/><rect x="132.50" y="211.60" width="4.10" height="0.70" fill="#555"/><rect x="146.60" y="216.60" width="4.60" height="0.70" fill="#555"/><rect x="102.40" y="247.80" width="16.00" height="0.80" fill="#333"/><rect x="102.40" y="252.20" width="49.00" height="0.45" fill="#a8a8a8"/><rect x="102.40" y="253.65" width="47.00" height="0.45" fill="#a8a8a8"/><rect x="102.40" y="255.10" width="50.00" height="0.45" fill="#a8a8a8"/><rect x="102.40" y="256.55" width="44.00" height="0.45" fill="#a8a8a8"/><rect x="102.40" y="258.00" width="48.00" height="0.45" fill="#a8a8a8"/><rect x="102.40" y="259.45" width="50.00" height="0.45" fill="#a8a8a8"/><rect x="102.40" y="260.90" width="46.00" height="0.45" fill="#a8a8a8"/><rect x="102.40" y="262.35" width="49.00" height="0.45" fill="#a8a8a8"/><rect x="102.40" y="263.80" width="30.00" height="0.45" fill="#a8a8a8"/><rect x="102.40" y="267.20" width="6.00" height="0.60" fill="#555"/><rect x="102.40" y="269.20" width="50.00" height="0.45" fill="#a8a8a8"/><rect x="102.40" y="270.65" width="48.00" height="0.45" fill="#a8a8a8"/><rect x="102.40" y="272.10" width="36.00" height="0.45" fill="#a8a8a8"/><rect x="102.40" y="291.20" width="9.00" height="0.80" fill="#333"/><rect x="103.20" y="295.60" width="45.00" height="0.45" fill="#a3a3a3"/><rect x="103.20" y="297.10" width="30.00" height="0.45" fill="#a3a3a3"/><rect x="102.60" y="300.00" width="48.00" height="0.45" fill="#a3a3a3"/><rect x="102.60" y="301.50" width="47.00" height="0.45" fill="#a3a3a3"/><rect x="102.60" y="303.00" width="28.00" height="0.45" fill="#a3a3a3"/><path d="M97.700 330.80h59" stroke="#6d8fd0" stroke-width="0.35"/><path d="M97.700 360.10h59" stroke="#6d8fd0" stroke-width="0.35"/><path d="M108.400 328.50q-6 1-6.600 4.400t-4.200 3" stroke="#ec9a4c" stroke-width="0.4" fill="none"/><path d="M158 354.80q-5 0.500-6.200 4.300t-5.800 4" stroke="#ec9a4c" stroke-width="0.4" fill="none"/><rect x="104.60" y="332.20" width="40.00" height="1.00" fill="#333"/><rect x="101" y="336.40" width="52.300" height="2.900" fill="#1565c0"/><path d="M101 344.10h52.300" stroke="#8a8a8a" stroke-width="0.3"/><path d="M101 348.10h52.300" stroke="#8a8a8a" stroke-width="0.3"/><path d="M101 353.40h52.300" stroke="#8a8a8a" stroke-width="0.3"/><path d="M101 358.30h52.300" stroke="#8a8a8a" stroke-width="0.3"/><path d="M101 336.40V358.30M104.700 336.40V358.30M124.400 336.40V358.30M153.300 336.40V358.30" stroke="#8a8a8a" stroke-width="0.3"/><rect x="105.40" y="340.40" width="16.00" height="0.50" fill="#8c8c8c"/><rect x="105.40" y="341.75" width="12.00" height="0.50" fill="#8c8c8c"/><rect x="126.00" y="340.20" width="15.00" height="0.45" fill="#8c8c8c"/><rect x="126.00" y="341.55" width="25.00" height="0.45" fill="#8c8c8c"/><rect x="126.00" y="342.90" width="10.00" height="0.45" fill="#8c8c8c"/><rect x="105.40" y="345.20" width="18.00" height="0.50" fill="#8c8c8c"/><rect x="105.40" y="346.55" width="10.00" height="0.50" fill="#8c8c8c"/><rect x="126.00" y="345.00" width="19.00" height="0.45" fill="#8c8c8c"/><rect x="126.00" y="346.35" width="21.00" height="0.45" fill="#8c8c8c"/><rect x="105.40" y="349.20" width="16.00" height="0.50" fill="#8c8c8c"/><rect x="105.40" y="350.55" width="14.00" height="0.50" fill="#8c8c8c"/><rect x="105.40" y="351.90" width="7.00" height="0.50" fill="#8c8c8c"/><rect x="126.00" y="349.00" width="24.00" height="0.45" fill="#8c8c8c"/><rect x="126.00" y="350.35" width="4.00" height="0.45" fill="#8c8c8c"/><rect x="126.00" y="351.70" width="19.00" height="0.45" fill="#8c8c8c"/><rect x="105.40" y="354.50" width="17.00" height="0.50" fill="#8c8c8c"/><rect x="105.40" y="355.85" width="17.00" height="0.50" fill="#8c8c8c"/><rect x="126.00" y="354.30" width="23.00" height="0.45" fill="#8c8c8c"/><rect x="126.00" y="355.65" width="19.00" height="0.45" fill="#8c8c8c"/><rect x="126.00" y="357.00" width="7.00" height="0.45" fill="#8c8c8c"/><rect x="97.150" y="327.950" width="60.400" height="34.600" fill="none" stroke="#86202f" stroke-width="1.3"/><path d="M97.700 372.80h59" stroke="#6d8fd0" stroke-width="0.35"/><path d="M108.400 370.50q-6 1-6.600 4.400t-4.200 3" stroke="#ec9a4c" stroke-width="0.4" fill="none"/><rect x="104.60" y="374.20" width="38.00" height="1.00" fill="#333"/><rect x="101" y="378.40" width="52.300" height="2.900" fill="#1565c0"/><path d="M101 385.80h52.300" stroke="#8a8a8a" stroke-width="0.3"/><path d="M101 390.40h52.300" stroke="#8a8a8a" stroke-width="0.3"/><path d="M101 378.40V394.20M104.700 378.40V394.20M124.400 378.40V394.20M153.300 378.40V394.20" stroke="#8a8a8a" stroke-width="0.3"/><rect x="105.40" y="382.40" width="16.00" height="0.50" fill="#8c8c8c"/><rect x="126.00" y="382.20" width="20.00" height="0.45" fill="#8c8c8c"/><rect x="105.40" y="383.80" width="12.00" height="0.50" fill="#8c8c8c"/><rect x="126.00" y="383.60" width="24.00" height="0.45" fill="#8c8c8c"/><rect x="105.40" y="385.20" width="9.00" height="0.50" fill="#8c8c8c"/><rect x="126.00" y="385.00" width="12.00" height="0.45" fill="#8c8c8c"/><rect x="105.40" y="386.60" width="17.00" height="0.50" fill="#8c8c8c"/><rect x="126.00" y="386.40" width="21.00" height="0.45" fill="#8c8c8c"/><rect x="105.40" y="388.00" width="13.00" height="0.50" fill="#8c8c8c"/><rect x="126.00" y="387.80" width="25.00" height="0.45" fill="#8c8c8c"/><rect x="105.40" y="389.40" width="8.00" height="0.50" fill="#8c8c8c"/><rect x="126.00" y="389.20" width="10.00" height="0.45" fill="#8c8c8c"/><rect x="105.40" y="390.80" width="15.00" height="0.50" fill="#8c8c8c"/><rect x="126.00" y="390.60" width="22.00" height="0.45" fill="#8c8c8c"/><rect x="105.40" y="392.20" width="14.00" height="0.50" fill="#8c8c8c"/><rect x="126.00" y="392.00" width="18.00" height="0.45" fill="#8c8c8c"/><rect x="105.40" y="393.60" width="12.00" height="0.50" fill="#8c8c8c"/><rect x="126.00" y="393.40" width="20.00" height="0.45" fill="#8c8c8c"/><path d="M149.600 337v7.600l1.800-1.600 1.300 2.900 1.100-0.500-1.300-2.800h2.400z" fill="#fff" stroke="#222" stroke-width="0.5"/></svg>
<svg class="a" style="left:0;top:0" width="768" height="432" viewBox="0 0 768 432"><rect x="223.70" y="158.30" width="405.60" height="228.80" fill="#fff" stroke="#d4d4d4" stroke-width="0.5"/></svg>
<div style="left:677.40px;top:154.00px;width:7.60px;height:214.40px;background:#dcdcdc;"></div>
<div style="left:677.40px;top:156.00px;width:6.60px;height:5.80px;background:#fdfdfd;"></div>
<div style="left:677.40px;top:362.40px;width:6.60px;height:5.60px;background:#fdfdfd;"></div>
<div style="left:678.00px;top:268.00px;width:6.00px;height:6.00px;background:#fdfdfd;"></div>
<svg class="a" style="left:0;top:0" width="768" height="432" viewBox="0 0 768 432"><path d="M679.500 159.600h2.400l-1.200-1.500zM679.500 364.600h2.400l-1.200 1.500z" fill="#555"/><path d="M679.600 372.600l1.100-1.100 1.100 1.100M679.600 374.400l1.100-1.100 1.100 1.100M679.600 379.400l1.100 1.100 1.100-1.100M679.600 381.200l1.100 1.100 1.100-1.100" stroke="#555" stroke-width="0.5" fill="none"/></svg>
<svg class="a" style="left:0;top:0" width="768" height="432" viewBox="0 0 768 432"><path d="M220.400 171.500H632.500" stroke="#4668b0" stroke-width="0.9"/><path d="M220.400 375.600H632.500" stroke="#4a78d0" stroke-width="0.9"/><path d="M298.2 155.7C296.2 155.9 289.9 156.4 286.2 157.2C282.4 158.0 278.9 159.2 275.7 160.5C272.4 161.8 269.2 163.2 266.7 165.0C264.2 166.8 262.2 169.0 260.6 171.0C259.0 173.0 257.8 175.0 256.9 177.0C256.0 179.0 256.0 181.0 255.4 183.0C254.8 185.0 254.5 186.8 253.1 189.0C251.7 191.2 249.6 193.9 247.1 195.9C244.6 197.9 241.6 199.5 238.1 201.1C234.6 202.7 230.1 204.2 226.0 205.3C221.9 206.4 215.4 207.1 213.3 207.4" stroke="#ea8f3e" stroke-width="1" fill="none"/><path d="M639.4 338.8C637.7 339.0 632.7 339.1 629.2 339.8C625.8 340.5 622.0 341.6 618.7 342.8C615.5 344.1 612.3 345.6 609.7 347.3C607.1 349.0 604.8 351.1 602.9 353.1C601.0 355.1 599.4 357.2 598.4 359.1C597.4 361.0 597.3 362.6 596.9 364.3C596.5 366.1 596.5 367.7 595.8 369.6C595.0 371.5 594.1 373.7 592.4 375.6C590.7 377.5 588.5 379.2 585.6 380.9C582.7 382.6 578.6 384.5 575.1 385.8C571.6 387.1 568.0 388.1 564.5 388.8C561.0 389.6 556.0 390.1 554.3 390.3" stroke="#ea8f3e" stroke-width="1" fill="none"/><rect x="245.80" y="211.50" width="361.20" height="20.00" fill="#0070c0"/><path d="M245.80 211.50H607.00" stroke="#3c3c3c" stroke-width="0.55"/><path d="M245.80 231.50H607.00" stroke="#3c3c3c" stroke-width="0.55"/><path d="M245.80 264.20H607.00" stroke="#3c3c3c" stroke-width="0.55"/><path d="M245.80 291.60H607.00" stroke="#3c3c3c" stroke-width="0.55"/><path d="M245.80 328.40H607.00" stroke="#3c3c3c" stroke-width="0.55"/><path d="M245.80 361.80H607.00" stroke="#3c3c3c" stroke-width="0.55"/><path d="M245.80 211.50V361.80" stroke="#3c3c3c" stroke-width="0.55"/><path d="M271.50 211.50V361.80" stroke="#3c3c3c" stroke-width="0.55"/><path d="M407.60 211.50V361.80" stroke="#3c3c3c" stroke-width="0.55"/><path d="M607.00 211.50V361.80" stroke="#3c3c3c" stroke-width="0.55"/></svg>
<span class="t" style="font-size:10.30px;top:180.66px;color:#111;font-weight:700;left:270.30px;transform-origin:0 50%;transform:scaleX(0.9431);-webkit-text-stroke:0.22px;">3. <u>Pengembangan</u> dan <u>Pemberdayaan</u> Usaha <u>Mikro</u> dan Kecil</span>
<span class="t" style="font-size:9.00px;top:217.67px;color:#0c1524;font-weight:700;left:251.60px;transform-origin:0 50%;transform:scaleX(1.0059);-webkit-text-stroke:0.22px;">No.</span>
<span class="t" style="font-size:9.00px;top:217.47px;color:#0c1524;font-weight:700;left:307.90px;transform-origin:0 50%;transform:scaleX(0.9693);-webkit-text-stroke:0.22px;">Nama <u>Kegiatan</u></span>
<span class="t" style="font-size:9.00px;top:217.47px;color:#0c1524;font-weight:700;left:472.50px;transform-origin:0 50%;transform:scaleX(0.9974);-webkit-text-stroke:0.22px;"><u>Indikator</u> Output</span>
<span class="t" style="font-size:9.60px;top:244.29px;color:#111;left:256.45px;transform-origin:0 50%;transform:scaleX(0.8039);-webkit-text-stroke:0.22px;">1</span>
<span class="t" style="font-size:9.60px;top:274.09px;color:#111;left:256.45px;transform-origin:0 50%;transform:scaleX(0.8039);-webkit-text-stroke:0.22px;">2</span>
<span class="t" style="font-size:9.60px;top:306.09px;color:#111;left:256.45px;transform-origin:0 50%;transform:scaleX(0.8039);-webkit-text-stroke:0.22px;">3</span>
<span class="t" style="font-size:9.60px;top:340.09px;color:#111;left:256.45px;transform-origin:0 50%;transform:scaleX(0.8039);-webkit-text-stroke:0.22px;">4</span>
<span class="t" style="font-size:9.00px;top:238.77px;color:#151515;left:272.00px;transform-origin:0 50%;transform:scaleX(1.0215);-webkit-text-stroke:0.22px;"><u>Pendataan</u> dan <u>Identifikasi</u></span>
<span class="t" style="font-size:9.00px;top:250.37px;color:#151515;left:272.00px;transform-origin:0 50%;transform:scaleX(1.0025);-webkit-text-stroke:0.22px;"><u>Potensi</u> UMK Warga</span>
<span class="t" style="font-size:9.00px;top:268.17px;color:#151515;left:272.00px;transform-origin:0 50%;transform:scaleX(1.0223);-webkit-text-stroke:0.22px;">Workshop Branding Produk dan</span>
<span class="t" style="font-size:9.00px;top:279.37px;color:#151515;left:272.00px;transform-origin:0 50%;transform:scaleX(1.0107);-webkit-text-stroke:0.22px;">Kemasan Menarik</span>
<span class="t" style="font-size:9.00px;top:294.57px;color:#151515;left:272.00px;transform-origin:0 50%;transform:scaleX(1.0079);-webkit-text-stroke:0.22px;"><u>Pelatihan</u> <u>Pemasaran</u> Digital</span>
<span class="t" style="font-size:9.00px;top:306.97px;color:#151515;left:272.00px;transform-origin:0 50%;transform:scaleX(1.0015);-webkit-text-stroke:0.22px;"><u>Sederhana</u> (WA <u>Bisnis</u> &amp;</span>
<span class="t" style="font-size:9.00px;top:318.87px;color:#151515;left:272.00px;transform-origin:0 50%;transform:scaleX(1.0079);-webkit-text-stroke:0.22px;">Instagram)</span>
<span class="t" style="font-size:9.00px;top:335.57px;color:#151515;left:272.00px;transform-origin:0 50%;transform:scaleX(1.0056);-webkit-text-stroke:0.22px;"><u>Peningkatan</u> <u>Kualitas</u> <u>Produk</u></span>
<span class="t" style="font-size:9.00px;top:347.27px;color:#151515;left:272.00px;transform-origin:0 50%;transform:scaleX(1.0025);-webkit-text-stroke:0.22px;"><u>(Standarisasi</u> dan <u>Higienitas)</u></span>
<span class="t" style="font-size:8.00px;top:234.24px;color:#151515;left:408.60px;transform-origin:0 50%;transform:scaleX(1.0010);-webkit-text-stroke:0.22px;">-</span>
<span class="t" style="font-size:8.00px;top:234.24px;color:#151515;left:417.75px;transform-origin:0 50%;transform:scaleX(1.0092);-webkit-text-stroke:0.22px;">15–30 <u>pelaku</u> <u>usaha</u> <u>mikro</u> <u>terdata</u></span>
<span class="t" style="font-size:8.00px;top:245.24px;color:#151515;left:408.60px;transform-origin:0 50%;transform:scaleX(1.0010);-webkit-text-stroke:0.22px;">-</span>
<span class="t" style="font-size:8.00px;top:245.24px;color:#151515;left:417.75px;transform-origin:0 50%;transform:scaleX(0.9908);-webkit-text-stroke:0.22px;">1 database UMK <u>lokal</u> <u>tersusun</u> <u>dengan</u> <u>jenis</u> <u>usaha,</u></span>
<span class="t" style="font-size:8.00px;top:255.84px;color:#151515;left:417.75px;transform-origin:0 50%;transform:scaleX(1.0226);-webkit-text-stroke:0.22px;"><u>kebutuhan,</u> <u>hambatan</u></span>
<span class="t" style="font-size:8.00px;top:269.74px;color:#151515;left:408.60px;transform-origin:0 50%;transform:scaleX(1.0010);-webkit-text-stroke:0.22px;">-</span>
<span class="t" style="font-size:8.00px;top:269.74px;color:#151515;left:417.75px;transform-origin:0 50%;transform:scaleX(1.0030);-webkit-text-stroke:0.22px;">10 UMK <u>memiliki</u> label dan <u>kemasan</u> <u>baru</u></span>
<span class="t" style="font-size:8.00px;top:280.24px;color:#151515;left:408.60px;transform-origin:0 50%;transform:scaleX(1.0010);-webkit-text-stroke:0.22px;">-</span>
<span class="t" style="font-size:8.00px;top:280.24px;color:#151515;left:417.75px;transform-origin:0 50%;transform:scaleX(1.0010);-webkit-text-stroke:0.22px;">1 <u>sesi</u> <u>pelatihan</u> <u>desain</u> branding <u>terlaksana</u></span>
<span class="t" style="font-size:8.00px;top:295.84px;color:#151515;left:408.60px;transform-origin:0 50%;transform:scaleX(1.0010);-webkit-text-stroke:0.22px;">-</span>
<span class="t" style="font-size:8.00px;top:295.84px;color:#151515;left:417.75px;transform-origin:0 50%;transform:scaleX(0.9896);-webkit-text-stroke:0.22px;">10 <u>pelaku</u> <u>usaha</u> <u>membuat</u> <u>akun</u> WA <u>Bisnis</u> <u>atau</u> IG</span>
<span class="t" style="font-size:8.00px;top:307.44px;color:#151515;left:417.75px;transform-origin:0 50%;transform:scaleX(0.9556);-webkit-text-stroke:0.22px;"><u>usaha</u></span>
<span class="t" style="font-size:8.00px;top:316.64px;color:#151515;left:408.60px;transform-origin:0 50%;transform:scaleX(1.0010);-webkit-text-stroke:0.22px;">-</span>
<span class="t" style="font-size:8.00px;top:316.64px;color:#151515;left:417.75px;transform-origin:0 50%;transform:scaleX(1.0258);-webkit-text-stroke:0.22px;">1 video tutorial <u>pemasaran</u> digital <u>dibuat</u></span>
<span class="t" style="font-size:8.00px;top:331.04px;color:#151515;left:408.60px;transform-origin:0 50%;transform:scaleX(1.0010);-webkit-text-stroke:0.22px;">-</span>
<span class="t" style="font-size:8.00px;top:331.04px;color:#151515;left:417.75px;transform-origin:0 50%;transform:scaleX(0.9979);-webkit-text-stroke:0.22px;">5 UMK <u>kuliner</u> <u>mengadopsi</u> SOP <u>sanitasi/higiene</u></span>
<span class="t" style="font-size:8.00px;top:341.54px;color:#151515;left:408.60px;transform-origin:0 50%;transform:scaleX(1.0010);-webkit-text-stroke:0.22px;">-</span>
<span class="t" style="font-size:8.00px;top:341.54px;color:#151515;left:417.75px;transform-origin:0 50%;transform:scaleX(1.0127);-webkit-text-stroke:0.22px;">1 <u>sesi</u> <u>pelatihan</u> <u>praktik</u> <u>produksi</u> <u>higienis</u></span>
<span class="t" style="font-size:8.00px;top:351.84px;color:#151515;left:417.75px;transform-origin:0 50%;transform:scaleX(0.9936);-webkit-text-stroke:0.22px;"><u>dilaksanakan</u></span>
<span class="t" style="font-size:5.40px;top:397.06px;color:#5a5856;left:86.00px;transform-origin:0 50%;transform:scaleX(0.9303);">Slide 17 of 30</span>
<span class="t" style="font-size:5.20px;top:397.36px;color:#5a5856;left:465.00px;transform-origin:0 50%;transform:scaleX(0.9576);">Notes</span>
<span class="t" style="font-size:5.20px;top:397.36px;color:#5a5856;left:495.00px;transform-origin:0 50%;transform:scaleX(0.9077);">Comments</span>
<span class="t" style="font-size:5.20px;top:397.36px;color:#5a5856;left:661.30px;transform-origin:0 50%;transform:scaleX(0.9326);">72%</span>
<div style="left:527.60px;top:395.00px;width:15.20px;height:9.40px;background:#d9d7d6;"></div>
<svg class="a" style="left:0;top:0" width="768" height="432" viewBox="0 0 768 432"><g stroke="#6a6866" stroke-width="0.5" fill="none"><path d="M458 400.400h5M458 401.600h5M459 399l1.500-1.600 1.500 1.600"/><path d="M488 397.200h5.400v3.600h-2.800l-1.200 1.400v-1.400h-1.400z"/><rect x="531.600" y="397.400" width="7.200" height="5" /><path d="M534 397.400v5M531.600 399h2.400M531.600 400.800h2.400"/><rect x="550.400" y="397.400" width="2" height="1.800"/><rect x="553.400" y="397.400" width="2" height="1.800"/><rect x="550.400" y="400.400" width="2" height="1.800"/><rect x="553.400" y="400.400" width="2" height="1.800"/><rect x="568" y="397.200" width="5.600" height="5.200"/><path d="M569.200 398.600h3.200M569.200 400h3.200"/><rect x="585" y="397" width="5.600" height="3.600"/><path d="M587.800 400.600v1.800M586.400 402.600h2.800"/><path d="M600.600 399.800h3M652 399.800h3M653.500 398.300v3"/><path d="M605.600 399.800H650" stroke="#9a9896"/><path d="M627.600 398.800v2" stroke="#9a9896"/><rect x="677.400" y="397.600" width="4.400" height="4.400"/><path d="M679.600 396.200v2.200M679.600 401.200v2.200M676 399.800h2.200M681 399.800h2.200"/></g><rect x="621" y="397.200" width="1.600" height="5.200" fill="#555"/></svg>
<div style="left:0.00px;top:405.00px;width:768.00px;height:27.00px;background:#1c1c1d;"></div>
<div style="left:82.00px;top:404.00px;width:603.00px;height:1.00px;background:#777676;"></div>
<span class="t" style="font-size:6.40px;top:410.89px;color:#f2f2f2;left:28.80px;transform-origin:0 50%;transform:scaleX(0.9712);">77°F</span>
<span class="t" style="font-size:6.40px;top:420.19px;color:#e0e0e0;left:28.80px;transform-origin:0 50%;transform:scaleX(1.0388);">Cloudy</span>
<div style="left:171.30px;top:410.20px;width:122.40px;height:16.60px;background:#f1f1f1;border-radius:8.3px;"></div>
<span class="t" style="font-size:7.20px;top:415.22px;color:#5c5c5c;left:191.80px;transform-origin:0 50%;transform:scaleX(0.9954);">Search</span>
<div style="left:569.50px;top:407.30px;width:19.00px;height:22.70px;background:#2b2b2c;border-radius:2px;box-shadow:inset 0 0 0 0.5px #3a3a3a;"></div>
<span class="t" style="font-size:6.60px;top:411.00px;color:#f2f2f2;left:729.00px;transform-origin:0 50%;transform:scaleX(1.0112);">10:20 AM</span>
<span class="t" style="font-size:6.60px;top:420.00px;color:#f2f2f2;left:730.20px;transform-origin:0 50%;transform:scaleX(1.0507);">1/3/2026</span>
<svg class="a" style="left:0;top:0" width="768" height="432" viewBox="0 0 768 432"><defs>
<linearGradient id="cl" x1="0" y1="0" x2="0" y2="1"><stop offset="0" stop-color="#b6d2fb"/><stop offset="1" stop-color="#7ea8ee"/></linearGradient>
<linearGradient id="wn" x1="0" y1="0" x2="1" y2="1"><stop offset="0" stop-color="#57c1f5"/><stop offset="1" stop-color="#1f86d8"/></linearGradient>
<linearGradient id="cop" x1="0" y1="0" x2="1" y2="1"><stop offset="0" stop-color="#2a8df0"/><stop offset="0.35" stop-color="#b05fe0"/><stop offset="0.65" stop-color="#f0607a"/><stop offset="1" stop-color="#f7c23a"/></linearGradient>
<linearGradient id="copl" x1="0" y1="0" x2="0" y2="1"><stop offset="0" stop-color="#2a86f0"/><stop offset="0.45" stop-color="#2ec0b0"/><stop offset="0.75" stop-color="#a8d840"/><stop offset="1" stop-color="#f4c83a"/></linearGradient><linearGradient id="copr" x1="0" y1="0" x2="0" y2="1"><stop offset="0" stop-color="#b050e8"/><stop offset="0.5" stop-color="#e850a0"/><stop offset="1" stop-color="#f47a3a"/></linearGradient><linearGradient id="zmg" x1="0" y1="0" x2="1" y2="1"><stop offset="0" stop-color="#3a86ff"/><stop offset="1" stop-color="#0a4ae0"/></linearGradient><linearGradient id="edg" x1="1" y1="0" x2="0" y2="1"><stop offset="0" stop-color="#6be06a"/><stop offset="0.4" stop-color="#28b4c0"/><stop offset="1" stop-color="#1372d0"/></linearGradient>
<linearGradient id="ffx" x1="0" y1="0" x2="0" y2="1"><stop offset="0" stop-color="#ffbd3a"/><stop offset="0.5" stop-color="#ff7a16"/><stop offset="1" stop-color="#e31587"/></linearGradient>
<linearGradient id="wrd" x1="0" y1="0" x2="0" y2="1"><stop offset="0" stop-color="#5ccaf8"/><stop offset="0.45" stop-color="#2f8ae8"/><stop offset="1" stop-color="#1a48c4"/></linearGradient>
<radialGradient id="door" cx="0.5" cy="0.5" r="0.5"><stop offset="0" stop-color="#1d6a52"/><stop offset="0.45" stop-color="#2f8a5a"/><stop offset="0.6" stop-color="#c89a3a"/><stop offset="1" stop-color="#e8d07a"/></radialGradient>
</defs><path d="M13.900 422.500a3.300 3.300 0 0 1 0.300-6.500a4.600 4.600 0 0 1 8.400 0.900a2.800 2.800 0 0 1 -0.200 5.600z" fill="url(#cl)"/><circle cx="20.900" cy="412.900" r="4.300" fill="#d9302c"/><rect x="150.60" y="411.90" width="6.400" height="6.200" rx="0.500" fill="url(#wn)"/><rect x="150.60" y="418.65" width="6.400" height="6.200" rx="0.500" fill="url(#wn)"/><rect x="157.55" y="411.90" width="6.400" height="6.200" rx="0.500" fill="url(#wn)"/><rect x="157.55" y="418.65" width="6.400" height="6.200" rx="0.500" fill="url(#wn)"/><circle cx="180.600" cy="417.800" r="2.600" fill="none" stroke="#333" stroke-width="0.9"/><path d="M182.600 420l2.200 2.400" stroke="#333" stroke-width="1"/><ellipse cx="278.600" cy="419.200" rx="14" ry="6.900" fill="#9aa546"/><path d="M265.600 417.600q3-5 13-5.200t13 5.200q-5-2.600-13-2.600t-13 2.600z" fill="#d3d26a"/><ellipse cx="269.600" cy="423.200" rx="4.600" ry="2.400" fill="#d79ad6"/><ellipse cx="287.600" cy="423.400" rx="4.400" ry="2.200" fill="#d79ad6"/><ellipse cx="278.600" cy="424.600" rx="5" ry="1.400" fill="#7f9a3a"/><circle cx="278.300" cy="419.300" r="5.500" fill="#b9823a"/><circle cx="278.300" cy="419.300" r="4.300" fill="#17604a"/><circle cx="278.300" cy="419.300" r="2.600" fill="#2a8a66"/><circle cx="278.300" cy="419.300" r="1.100" fill="#d8b04a"/><circle cx="269.400" cy="419" r="2.200" fill="#a8742e"/><circle cx="287.200" cy="419" r="2.200" fill="#a8742e"/><circle cx="269.400" cy="419" r="1.300" fill="#3aa0a0"/><circle cx="287.200" cy="419" r="1.300" fill="#3aa0a0"/><rect x="301.200" y="415.500" width="10.200" height="8.700" rx="1" fill="#5c5c5c"/><rect x="304.900" y="412" width="10.400" height="9" rx="1" fill="#e4e4e4"/><path d="M329.400 412.700h3.600q1.500 0 1.100 1.500l-2.300 8.200q-0.500 1.700-2.100 1.700h-1.500q-2 0-1.600-2.300l1.500-7.200q0.400-1.900 1.300-1.900z" fill="url(#copl)"/><path d="M335 412.700h2.400q2 0 1.600 2.300l-1.500 7.200q-0.400 1.900-1.900 1.900h-3q-1.500 0-1.100-1.500l2.300-8.200q0.500-1.700 1.200-1.700z" fill="url(#copr)"/><circle cx="357.500" cy="418.400" r="6.700" fill="url(#edg)"/><path d="M352.300 420.600q-0.600-4 3-5.400t6.400 0.600q1.800 1.600 1.200 3.200h-5.600q-0.400 2.600 2.400 3.600q-5.400 1.400-7.400-2z" fill="#0d4f9c"/><path d="M357.600 419.600h7q-0.200 1.800-1.400 2.600q-2.400 1.200-5-0.200q-0.800-1-0.600-2.400z" fill="#1c1c1d"/><path d="M351.200 420q1 4 5.600 4.600t6.800-2.600q-3.400 2-6.600 0.800t-3.800-4.400q-1.600 0-2 1.600z" fill="#1f8ee0"/><rect x="375.800" y="411.900" width="12.900" height="12.900" rx="0.800" fill="#12401e"/><rect x="377.600" y="414.600" width="4.200" height="6.800" rx="0.500" fill="#d8d4d2" transform="rotate(-16 379.700 418)"/><rect x="382.800" y="414.600" width="4.200" height="6.800" rx="0.500" fill="#d8d4d2" transform="rotate(16 384.900 418)"/><rect x="380" y="413.600" width="4.600" height="7.600" rx="0.500" fill="#f2eeee"/><path d="M381.200 416.200h2.200v2.400h-2.200z" fill="#c8322a"/><circle cx="379" cy="420.800" r="0.700" fill="#333"/><circle cx="385.600" cy="420.800" r="0.700" fill="#c8322a"/><path d="M378.600 423.200h7.600" stroke="#cfcaca" stroke-width="1"/><path d="M403.400 415.600v-1.400q0-1.600 1.600-1.600h3.800q1.600 0 1.600 1.600v1.400" fill="none" stroke="#1e9ae4" stroke-width="1.200"/><rect x="400.300" y="415" width="13.200" height="9.700" rx="1.300" fill="#f4f4f4"/><rect x="404.400" y="417" width="2.400" height="2.400" fill="#f25022"/><rect x="407.200" y="417" width="2.400" height="2.400" fill="#7fba00"/><rect x="404.400" y="419.800" width="2.400" height="2.400" fill="#00a4ef"/><rect x="407.200" y="419.800" width="2.400" height="2.400" fill="#ffb900"/><circle cx="436.200" cy="414.800" r="1.700" fill="#7b83eb"/><rect x="433" y="416.800" width="6" height="6.400" rx="1.400" fill="#5b62c8"/><circle cx="431" cy="414.200" r="2.200" fill="#7b83eb"/><rect x="427" y="416.600" width="8.400" height="8" rx="1.600" fill="#7b83eb"/><rect x="425.400" y="415.600" width="6.600" height="6.600" rx="0.800" fill="#4b53bc"/><path d="M427.200 417.400h3M428.700 417.400v3.400" stroke="#fff" stroke-width="0.8"/><path d="M449.600 413.800q0-1 1-1h3.400l1.400 1.400h7q1 0 1 1v8.400q0 1-1 1h-11.800q-1 0-1-1z" fill="#e8a822"/><rect x="449.600" y="415.800" width="13.800" height="8.800" rx="1" fill="#f9d24a"/><rect x="452.600" y="421.400" width="7.800" height="3.200" fill="#3a8ad8"/><circle cx="481.200" cy="418.800" r="6.400" fill="url(#ffx)"/><path d="M482.800 411.800q3.600 1.600 4.600 5l-2.600-1.400z" fill="#ffb52a"/><circle cx="480.600" cy="418.600" r="2.600" fill="#7a3fd8"/><path d="M475.800 415.600q2-0.800 3.400 0.600t3.200 0.800q-0.800 1.800-2.800 1.800t-3.800-3.200z" fill="#ff9a2a"/><path d="M475.400 414.400q-0.600 2.200 0.400 3.200l1.200-2z" fill="#ff8a1a"/><circle cx="505.800" cy="418.500" r="6.500" fill="#1ed760"/><path d="M502.200 416.200q3.800-1 7.400 0.700M502.600 418.500q3.200-0.800 6.200 0.600M503.100 420.600q2.600-0.600 4.900 0.500" stroke="#10151a" stroke-width="1" fill="none" stroke-linecap="round"/><rect x="526" y="412.100" width="9.900" height="12.700" rx="1.200" fill="url(#wrd)"/><rect x="524" y="418" width="5.800" height="5" rx="0.700" fill="#1a48b4"/><path d="M525 419.300l0.800 2.600 0.900-2.600 0.900 2.600 0.800-2.600" stroke="#fff" stroke-width="0.550" fill="none"/><circle cx="554.400" cy="418.800" r="5.300" fill="#16241b" stroke="#25d366" stroke-width="1.300"/><path d="M549.300 425.200l1-3.400 2.200 2.400z" fill="#25d366"/><path d="M552.300 416.500q-0.700 1.800 1.100 3.600t3.400 1.400l0.500-1.200-1.500-0.800-0.700 0.700q-1.200-0.500-1.800-1.800l0.700-0.700-0.700-1.500z" fill="#25d366"/><circle cx="560.400" cy="413.200" r="4.100" fill="#4ab0f2"/><rect x="573.600" y="412" width="13" height="13" rx="5.400" fill="url(#zmg)"/><rect x="575.800" y="427.300" width="8.800" height="1.400" rx="0.700" fill="#4ab8f0"/><rect x="504.20" y="428" width="3.200" height="1.100" rx="0.550" fill="#9a9da0"/><rect x="528.40" y="428" width="3.200" height="1.100" rx="0.550" fill="#9a9da0"/><rect x="552.80" y="428" width="3.200" height="1.100" rx="0.550" fill="#9a9da0"/><path d="M631.200 420.200l3-3 3 3" stroke="#f0f0f0" stroke-width="0.900" fill="none"/><path d="M648.400 421.600a2.400 2.400 0 0 1 0.300-4.700a3.400 3.400 0 0 1 6.400 0.500a2.200 2.200 0 0 1 0.200 4.200z" fill="none" stroke="#7c7c7c" stroke-width="0.800"/><path d="M647.600 414.800l9 8.200" stroke="#7c7c7c" stroke-width="0.900"/><rect x="669" y="413.600" width="3" height="6" rx="1.500" fill="none" stroke="#4aa8cc" stroke-width="0.800"/><path d="M667.600 418a2.900 2.900 0 0 0 5.800 0M670.500 421v2M669 423.200h3" stroke="#4ab0d8" stroke-width="0.700" fill="none"/><path d="M683.400 416.600q4.400-3.800 8.800 0M685 418.600q2.800-2.400 5.600 0M686.500 420.500q1.300-1.100 2.600 0" stroke="#f0f0f0" stroke-width="0.800" fill="none"/><circle cx="687.800" cy="422.200" r="0.700" fill="#f0f0f0"/><path d="M697 417.400h1.600l2.200-2v7.200l-2.200-2h-1.600z" fill="none" stroke="#f0f0f0" stroke-width="0.700"/><path d="M702.400 417q1.200 2 0 4M704 415.600q2.200 3.400 0 6.800" stroke="#f0f0f0" stroke-width="0.700" fill="none"/><rect x="711.600" y="415.800" width="8" height="5.600" rx="1.200" fill="none" stroke="#f0f0f0" stroke-width="0.800"/><rect x="712.800" y="417" width="3.600" height="3.200" fill="#f0f0f0"/><path d="M720.400 417.600v2" stroke="#f0f0f0" stroke-width="0.800"/><path d="M712.600 414.200l1.600 1.800M713.800 413.800v2.400" stroke="#f0f0f0" stroke-width="0.800"/></svg>
<span class="t" style="font-size:5.80px;top:410.27px;color:#fff;font-weight:700;left:19.28px;transform-origin:0 50%;transform:scaleX(1.0010);">2</span>
<span class="t" style="font-size:6.40px;top:410.49px;color:#fff;left:558.62px;transform-origin:0 50%;transform:scaleX(1.0010);">3</span>
<span class="t" style="font-size:7.40px;top:414.92px;color:#fff;left:575.40px;transform-origin:0 50%;transform:scaleX(0.9525);">zm</span>
</body></html>
